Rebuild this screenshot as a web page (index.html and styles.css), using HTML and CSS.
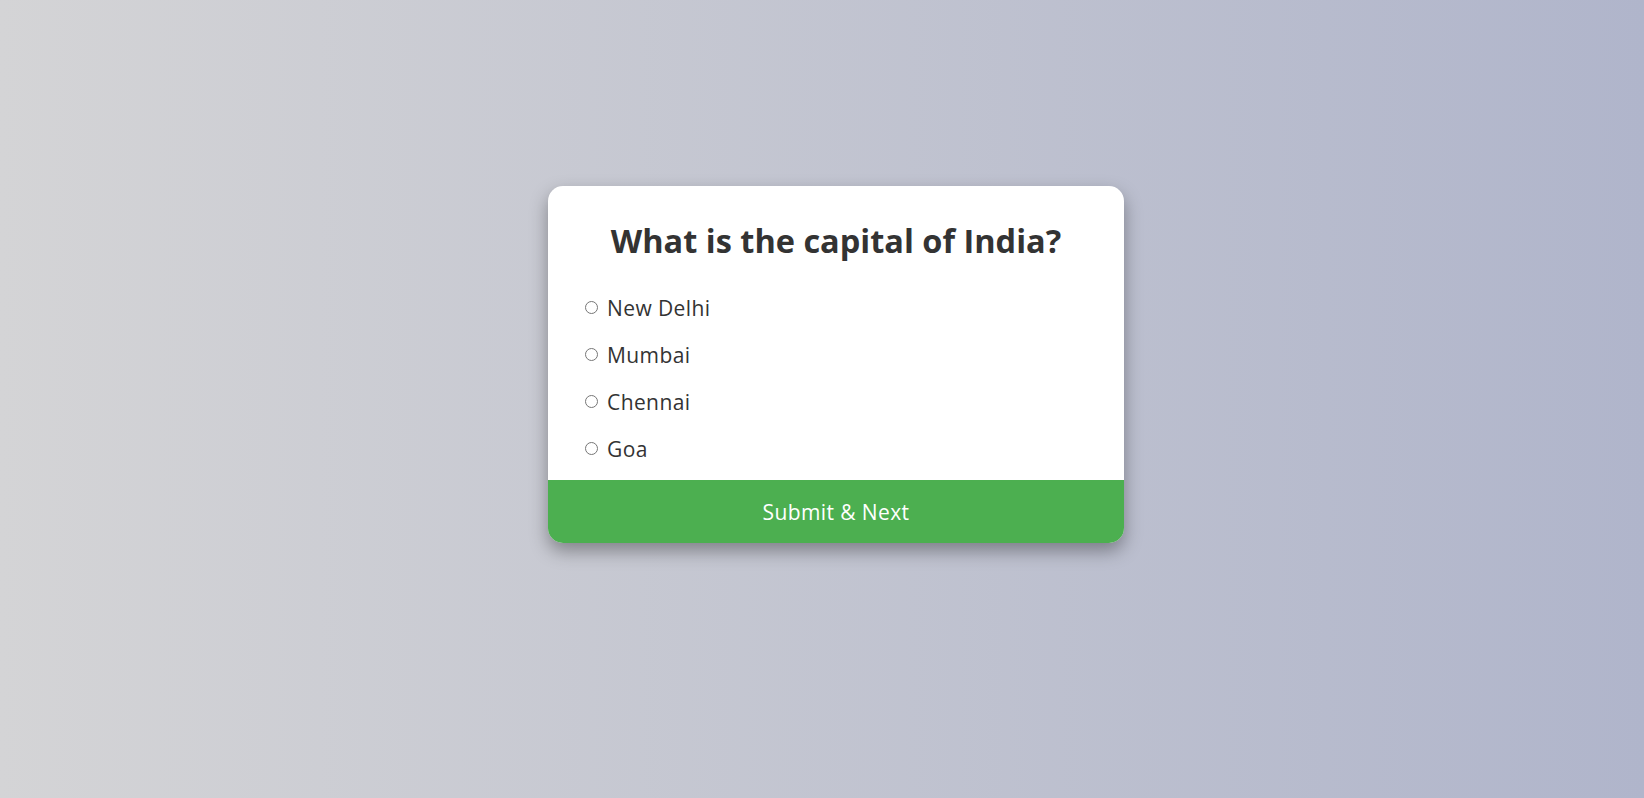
FILE: index.html
```html
<!DOCTYPE html>
<html lang="en">
<head>
<meta charset="utf-8">
<title>Quiz</title>
<link rel="stylesheet" href="styles.css">
</head>
<body>
  <div class="quiz-card">
    <div class="quiz-header">
      <h2 class="question">What is the capital of India?</h2>
      <ul class="options">
        <li class="option"><input type="radio" name="answer" id="a" class="radio"><label for="a">New Delhi</label></li>
        <li class="option"><input type="radio" name="answer" id="b" class="radio"><label for="b">Mumbai</label></li>
        <li class="option"><input type="radio" name="answer" id="c" class="radio"><label for="c">Chennai</label></li>
        <li class="option"><input type="radio" name="answer" id="d" class="radio"><label for="d">Goa</label></li>
      </ul>
    </div>
    <button class="submit">Submit &amp; Next</button>
  </div>
</body>
</html>
```
FILE: styles.css
```css
html, body {
  margin: 0;
  height: 100%;
}
body {
  background: linear-gradient(to right, #d4d4d6 0%, #b0b5cb 100%);
  font-family: "Open Sans", "Noto Sans", sans-serif;
  color: #333;
  display: flex;
  justify-content: center;
  align-items: flex-start;
  padding: 186px 0 0 28px;
  box-sizing: border-box;
}
.quiz-card {
  width: 576px;
  background: #fff;
  border-radius: 15px;
  overflow: hidden;
  box-shadow: 0 8px 18px rgba(0, 0, 0, 0.35);
}
.quiz-header {
  padding: 35px 32px 8px 32px;
}
.question {
  margin: 0;
  font-size: 32.5px;
  line-height: 40px;
  font-weight: 700;
  text-align: center;
  color: #333;
}
.options {
  list-style: none;
  margin: 23px 0 0 0;
  padding: 0;
}
.option {
  height: 47px;
  display: flex;
  align-items: center;
  font-size: 21px;
  letter-spacing: 0.4px;
}
.radio {
  width: 13px;
  height: 13px;
  margin: 0 9px 0 5px;
}
.submit {
  display: block;
  width: 100%;
  height: 63px;
  border: none;
  background: #4caf50;
  color: #fff;
  font-family: inherit;
  font-size: 21px;
  letter-spacing: 0.4px;
  cursor: pointer;
  padding: 0;
}
```
